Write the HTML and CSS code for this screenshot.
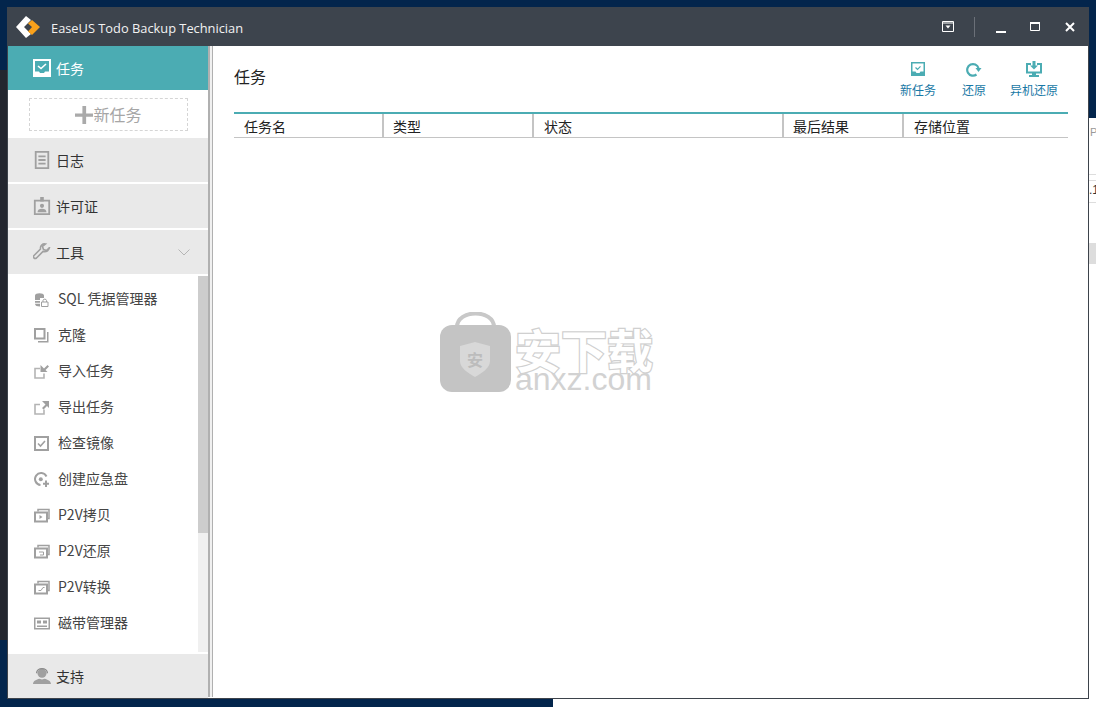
FILE: index.html
```html
<!DOCTYPE html>
<html lang="zh-CN">
<head>
    <meta charset="UTF-8">
    <title>EaseUS Todo Backup Technician</title>
    <link rel="stylesheet" href="styles.css">
</head>
<body>
    <!-- desktop behind the window -->
    <div class="desk-dark"></div>
    <div class="desk-page">
        <span class="desk-pa">Pa</span>
        <div class="desk-line line-a"></div>
        <div class="desk-line line-b"></div>
        <span class="desk-num">.1</span>
        <div class="desk-line line-c"></div>
        <div class="desk-block"></div>
    </div>
    <div class="desk-bottom"></div>

    <div class="window">
        <div class="titlebar">
            <svg class="logo" viewBox="0 0 24 22">
                <path d="M10 0L0 11l10 11 5-4-7-7 7-7z" fill="#fff"/>
                <path d="M16 4l8 7-8 8-4-3.500 4-4.500-4-3.500z" fill="#f9a11b"/>
            </svg>
            <span class="app-name">EaseUS Todo Backup Technician</span>
            <div class="win-controls">
                <svg class="win-btn menu-btn" viewBox="0 0 12 11"><path d="M.5.5h11v10H.5zM0 2h12" fill="none" stroke="#fff"/><path d="M3.500 4.500h5L6 7.500z" fill="#fff"/></svg>
                <div class="win-sep"></div>
                <svg class="win-btn min-btn" viewBox="0 0 10 10"><path d="M0 8h10v2H0z" fill="#fff"/></svg>
                <svg class="win-btn max-btn" viewBox="0 0 10 9"><path d="M.5 1h9v7.500h-9z" fill="none" stroke="#fff"/><path d="M0 0h10v2H0z" fill="#fff"/></svg>
                <svg class="win-btn close-btn" viewBox="0 0 10 10"><path d="M1 1l8 8M9 1l-8 8" fill="none" stroke="#fff" stroke-width="2"/></svg>
            </div>
        </div>

        <div class="content">
            <div class="sidebar">
                <div class="nav-item active">
                    <svg class="nav-icon" viewBox="0 0 18 18"><path d="M0 0h18v18H0z" fill="#fff"/><path d="M2 2h14v10.500h-4l-1 1.500H7l-1-1.500H2z" fill="#4bacb3"/><path d="M5 7l3 2.500L13 5" fill="none" stroke="#fff" stroke-width="1.600"/></svg>
                    <span>任务</span>
                </div>
                <div class="new-task-area">
                    <div class="new-task">
                        <svg class="plus" viewBox="0 0 17 17"><path d="M7 0h3.500v7H17v3.200h-6.500V17H7v-6.800H0V7h7z" fill="#aaa"/></svg>
                        <span>新任务</span>
                    </div>
                </div>
                <div class="nav-item">
                    <svg class="nav-icon" viewBox="0 0 16 20"><path d="M1 1h14v18H1z" fill="none" stroke="#a0a0a0" stroke-width="2"/><path d="M4 6h8M4 10h8M4 14h8" stroke="#a0a0a0" stroke-width="2"/></svg>
                    <span>日志</span>
                </div>
                <div class="nav-item nav-license">
                    <svg class="nav-icon" viewBox="0 0 18 20"><path d="M1 4h16v15H1z" fill="none" stroke="#a0a0a0" stroke-width="2"/><path d="M7 0h4v5H7zM9 7.500a2.300 2.300 0 1 1 0 4.600 2.300 2.300 0 0 1 0-4.600zM4 17c0-3 2-4 5-4s5 1 5 4z" fill="#a0a0a0"/></svg>
                    <span>许可证</span>
                </div>
                <div class="nav-item nav-tools">
                    <svg class="nav-icon" viewBox="0 0 18 18"><path d="M16.500 4.500l-3 3-3-1-1-3 3-2.500c-3-.5-5.500 1.500-5 5l-6.500 6.500c-1.500 1.500.5 4 2.500 2.500l6.500-6.500c3.500 1 6.500-1.500 6.500-4.500z" fill="none" stroke="#a0a0a0" stroke-width="1.600"/></svg>
                    <span>工具</span>
                    <svg class="chevron" viewBox="0 0 12 7"><path d="M.5.5L6 6 11.500.5" fill="none" stroke="#b5b5b5"/></svg>
                </div>

                <div class="tool-area">
                    <div class="tool-list">
                        <div class="tool">
                            <svg class="tool-icon" viewBox="0 0 15 15"><path d="M1 3.500C1 .5 10 .5 10 3.500V6H6v2H1zM1 9h5v1.800H1zM1 11.800h5V14.500C3 14.500 1 14 1 11.800z" fill="#a0a0a0"/><path d="M7.500 10h6.500v4.500H7.500zM9 10V8.500c0-1.800 3.500-1.800 3.500 0V10" fill="none" stroke="#a0a0a0"/></svg>
                            <span>SQL 凭据管理器</span>
                        </div>
                        <div class="tool">
                            <svg class="tool-icon" viewBox="0 0 15 15"><path d="M1 1h9.500v9.500H1z" fill="none" stroke="#a0a0a0" stroke-width="2"/><path d="M13 4h1.500v10.500H4V13h9z" fill="#a0a0a0"/></svg>
                            <span>克隆</span>
                        </div>
                        <div class="tool">
                            <svg class="tool-icon" viewBox="0 0 15 15"><path d="M6 4.500H1v9.500h9V9.500" fill="none" stroke="#b4b4b4" stroke-width="1.600"/><path d="M13.500 1L15 2.500l-3.500 3.500 2 2H6.500V1l2 2 1.500 1.500z" fill="#a0a0a0"/></svg>
                            <span>导入任务</span>
                        </div>
                        <div class="tool">
                            <svg class="tool-icon" viewBox="0 0 15 15"><path d="M6 4.500H1v9.500h9V9.500" fill="none" stroke="#b4b4b4" stroke-width="1.600"/><path d="M8 1h7v7l-2-2-3.500 3.500L8 8l3.500-3.500z" fill="#a0a0a0"/></svg>
                            <span>导出任务</span>
                        </div>
                        <div class="tool">
                            <svg class="tool-icon" viewBox="0 0 15 15"><path d="M1 1h13v13H1z" fill="none" stroke="#a0a0a0" stroke-width="2"/><path d="M4 7.500l2.500 2.500L11 5" fill="none" stroke="#a0a0a0" stroke-width="1.600"/></svg>
                            <span>检查镜像</span>
                        </div>
                        <div class="tool">
                            <svg class="tool-icon" viewBox="0 0 15 15"><path d="M12.500 4.500A6 6 0 1 0 6.500 13" fill="none" stroke="#a0a0a0" stroke-width="2"/><circle cx="6.800" cy="7.300" r="2" fill="#a0a0a0"/><path d="M11 8.500h2v2.200h2v2h-2V15h-2v-2.300H9v-2h2z" fill="#a0a0a0"/></svg>
                            <span>创建应急盘</span>
                        </div>
                        <div class="tool">
                            <svg class="tool-icon p2v" viewBox="0 0 16 14"><path d="M4 3V1h11v9h-2" fill="none" stroke="#a0a0a0" stroke-width="1.500"/><path d="M1 4h12v9H1z" fill="none" stroke="#a0a0a0" stroke-width="2"/><path d="M5.500 6.500l3 2-3 2z" fill="#a0a0a0"/></svg>
                            <span>P2V拷贝</span>
                        </div>
                        <div class="tool">
                            <svg class="tool-icon p2v" viewBox="0 0 16 14"><path d="M4 3V1h11v9h-2" fill="none" stroke="#a0a0a0" stroke-width="1.500"/><path d="M1 4h12v9H1z" fill="none" stroke="#a0a0a0" stroke-width="2"/><path d="M5 7.500h4.500v3H6" fill="none" stroke="#a0a0a0"/></svg>
                            <span>P2V还原</span>
                        </div>
                        <div class="tool">
                            <svg class="tool-icon p2v" viewBox="0 0 16 14"><path d="M4 3V1h11v9h-2" fill="none" stroke="#a0a0a0" stroke-width="1.500"/><path d="M1 4h12v9H1z" fill="none" stroke="#a0a0a0" stroke-width="2"/><path d="M4.500 10h2.500l2-3h1.500" fill="none" stroke="#a0a0a0"/></svg>
                            <span>P2V转换</span>
                        </div>
                        <div class="tool">
                            <svg class="tool-icon p2v" viewBox="0 0 16 12"><path d="M0 0h16v12H0z" fill="#a0a0a0"/><path d="M1.500 1.500h13v9h-13z" fill="#fff"/><path d="M3 3h4v3H3zM9 3h4v3H9zM3 8h10v1.500H3z" fill="#a0a0a0"/></svg>
                            <span>磁带管理器</span>
                        </div>
                    </div>
                    <div class="scrollbar"><div class="thumb"></div></div>
                </div>

                <div class="nav-item nav-support">
                    <svg class="nav-icon" viewBox="0 0 20 18"><circle cx="10" cy="6" r="5" fill="#a0a0a0"/><path d="M4 6c0-7 12-7 12 0" fill="none" stroke="#8a8a8a" stroke-width="1.500"/><path d="M0 18c0-4 4-5 7-6l3 1 3-1c3 1 7 2 7 6z" fill="#a0a0a0"/></svg>
                    <span>支持</span>
                </div>
            </div>

            <div class="splitter"></div>

            <div class="main">
                <div class="main-head">
                    <div class="main-title">任务</div>
                    <div class="actions">
                        <div class="action action-new">
                            <svg class="action-icon" viewBox="0 0 16 16"><path d="M1 1h14v14H1z" fill="#4bacb3"/><path d="M2.500 2.500h11v8h-3l-1 1.500h-3l-1-1.500h-3z" fill="#fff"/><path d="M5.500 6.500l2 1.800 3-3" fill="none" stroke="#4bacb3" stroke-width="1.200"/></svg>
                            <span>新任务</span>
                        </div>
                        <div class="action">
                            <svg class="action-icon" viewBox="0 0 16 16"><path d="M10.500 13.500A5.800 5.800 0 1 1 12.500 7" fill="none" stroke="#4bacb3" stroke-width="2.200"/><path d="M9.500 7h6l-3 4z" fill="#4bacb3"/></svg>
                            <span>还原</span>
                        </div>
                        <div class="action">
                            <svg class="action-icon" viewBox="0 0 16 16"><path d="M5 3H1v8.500h14V3h-4" fill="none" stroke="#4bacb3" stroke-width="2"/><path d="M6.500 0h3v4.500H12L8 8.500 4 4.500h2.500zM6 12h4v2h3v2H3v-2h3z" fill="#4bacb3"/></svg>
                            <span>异机还原</span>
                        </div>
                    </div>
                </div>
                <div class="table-head">
                    <div class="col col-name">任务名</div>
                    <div class="col col-type">类型</div>
                    <div class="col col-state">状态</div>
                    <div class="col col-result">最后结果</div>
                    <div class="col col-place">存储位置</div>
                </div>
            </div>
        </div>

        <!-- watermark over the empty table -->
        <div class="watermark">
            <svg class="bag" viewBox="0 0 71 80">
                <path d="M17 15C17 -3 54 -3 54 15" fill="none" stroke="#c8c8c8" stroke-width="4"/>
                <rect x="0" y="13" width="71" height="67" rx="12" fill="#c4c4c4"/>
                <path d="M35 30l15 4v15c0 7-8 12-15 16-7-4-15-9-15-16V34z" fill="#d8d8d8"/>
                <text class="bag-mark" x="35" y="54" text-anchor="middle">安</text>
            </svg>
            <div class="mark-text">
                <div class="mark-cn">安下载</div>
                <div class="mark-en">anxz.com</div>
            </div>
        </div>
    </div>
</body>
</html>
```

FILE: styles.css
```css
html, body {
    margin: 0;
    height: 100%;
    overflow: hidden;
}
body {
    position: relative;
    background: #03254c;
    font-family: "Noto Sans CJK SC", "Noto Sans", sans-serif;
    font-size: 14px;
    color: #333;
}

/* desktop pieces */
.desk-dark {
    position: absolute;
    left: 0;
    top: 70px;
    width: 8px;
    height: 570px;
    background: #23262f;
}
.desk-page {
    position: absolute;
    left: 1089px;
    top: 118px;
    width: 7px;
    height: 589px;
    background: #fff;
    overflow: hidden;
    font-family: "Liberation Sans", sans-serif;
    font-size: 11px;
    color: #999;
}
.desk-pa {
    position: absolute;
    left: 1px;
    top: 8px;
}
.desk-num {
    position: absolute;
    left: 0;
    top: 65px;
    color: #333;
    font-size: 12px;
}
.desk-line {
    position: absolute;
    left: 0;
    width: 7px;
    height: 1px;
    background: #ddd;
}
.line-a { top: 56px; }
.line-b { top: 62px; }
.line-c { top: 84px; }
.desk-block {
    position: absolute;
    left: 0;
    top: 125px;
    width: 7px;
    height: 21px;
    background: #ddd;
}
.desk-bottom {
    position: absolute;
    left: 553px;
    top: 699px;
    width: 543px;
    height: 8px;
    background: #fff;
}

/* window */
.window {
    position: absolute;
    left: 7px;
    top: 7px;
    width: 1080px;
    height: 691px;
    display: flex;
    flex-direction: column;
    background: #fff;
    border: 1px solid #3d434b;
    border-top: none;
}
.titlebar {
    height: 39px;
    flex-shrink: 0;
    display: flex;
    align-items: center;
    background: #3d444d;
    color: #f2f2f2;
    margin: 0 -1px;
    padding-left: 9px;
}
.logo {
    width: 24px;
    height: 22px;
}
.app-name {
    margin-left: 11px;
    margin-top: 3px;
    font-family: "Open Sans", sans-serif;
    font-size: 12.830px;
}
.win-controls {
    margin-left: auto;
    display: flex;
    align-items: center;
    padding-right: 14px;
}
.win-btn {
    display: block;
}
.menu-btn {
    width: 12px;
    height: 11px;
}
.win-sep {
    width: 1px;
    height: 20px;
    margin: 0 21px 0 20px;
    background: #6b7078;
}
.min-btn {
    width: 10px;
    height: 10px;
    margin-top: 2px;
}
.max-btn {
    width: 10px;
    height: 9px;
    margin-left: 24px;
}
.close-btn {
    width: 10px;
    height: 10px;
    margin-left: 25px;
}

.content {
    flex: 1;
    display: flex;
    min-height: 0;
}

/* sidebar */
.sidebar {
    width: 200px;
    flex-shrink: 0;
    display: flex;
    flex-direction: column;
    background: #fff;
}
.nav-item {
    height: 44px;
    flex-shrink: 0;
    display: flex;
    align-items: center;
    padding-left: 25px;
    background: #e9e9e9;
    font-size: 14px;
    color: #333;
}
.nav-item span {
    margin-left: 5px;
}
.nav-item.active {
    background: #4bacb3;
    color: #fff;
}
.nav-icon {
    width: 18px;
    height: 18px;
}
.nav-license {
    height: 46px;
    margin-top: 2px;
    border-bottom: 2px solid #fff;
    box-sizing: border-box;
}
.nav-tools {
    padding-right: 18px;
}
.nav-tools span {
    margin-top: -1px;
}
.chevron {
    width: 12px;
    height: 7px;
    margin-left: auto;
}
.new-task-area {
    height: 48px;
    flex-shrink: 0;
    padding: 8px 20px 0 21px;
    box-sizing: border-box;
}
.new-task {
    height: 33px;
    box-sizing: border-box;
    display: flex;
    align-items: center;
    justify-content: center;
    padding-bottom: 1px;
    border: 1px dashed #d5d5d5;
    color: #a6a6a6;
    font-size: 16px;
}
.plus {
    width: 18px;
    height: 18px;
    margin-top: 1px;
}

/* tools list */
.tool-area {
    flex: 1;
    min-height: 0;
    display: flex;
}
.tool-list {
    flex: 1;
    padding-top: 7px;
}
.tool {
    height: 36px;
    display: flex;
    align-items: center;
    padding-left: 26px;
    font-size: 14px;
    color: #444;
}
.tool span {
    margin-left: 9px;
    margin-top: -2px;
}
.tool-icon {
    width: 15px;
    height: 15px;
}
.tool-icon.p2v {
    width: 16px;
    margin-right: -1px;
}
.scrollbar {
    width: 10px;
    margin: 2px 0;
    background: #f0f0f0;
}
.thumb {
    height: 257px;
    background: #cdcdcd;
}

.splitter {
    width: 2px;
    flex-shrink: 0;
    background: #f0f0f0;
    border-left: 2px solid #b0b0b0;
    border-right: 1px solid #b0b0b0;
    margin-bottom: 1px;
}

/* main panel */
.main {
    flex: 1;
    padding: 0 20px 0 21px;
    min-width: 0;
}
.main-head {
    height: 66px;
    display: flex;
    justify-content: space-between;
}
.main-title {
    margin-top: 18px;
    font-size: 16px;
    line-height: 24px;
    color: #222;
}
.actions {
    display: flex;
    padding-right: 10px;
    gap: 24px;
    padding-top: 15px;
}
.action {
    display: flex;
    flex-direction: column;
    align-items: center;
    font-size: 12px;
    line-height: 18px;
    color: #1878a5;
}
.action-new {
    margin-right: 2px;
}
.action-icon {
    width: 16px;
    height: 16px;
    margin-bottom: 4px;
}
.table-head {
    display: flex;
    height: 23px;
    border-top: 2px solid #4bacb3;
    border-bottom: 1px solid #c4c4c4;
}
.col {
    box-sizing: border-box;
    padding-left: 10px;
    border-right: 2px solid #c4c4c4;
    font-size: 14px;
    line-height: 24px;
    color: #222;
    overflow: hidden;
}
.col-name { width: 150px; }
.col-type { width: 150px; padding-left: 9px; }
.col-state { width: 250px; }
.col-result { width: 120px; padding-left: 9px; }
.col-place { border-right: none; flex: 1; }

/* watermark */
.watermark {
    position: absolute;
    left: 432px;
    top: 305px;
    display: flex;
    pointer-events: none;
}
.bag {
    width: 71px;
    height: 80px;
}
.bag-mark {
    font-size: 16px;
    font-weight: 700;
    fill: #bcbcbc;
}
.mark-text {
    margin-left: 4px;
    padding-top: 11px;
}
.mark-cn {
    font-size: 46px;
    line-height: 50px;
    font-weight: 700;
    color: #fff;
    -webkit-text-stroke: 2.500px #d0d0d0;
    paint-order: stroke fill;
}
.mark-en {
    margin-top: -9px;
    font-family: "Liberation Sans", sans-serif;
    font-size: 32px;
    line-height: 30px;
    color: #d2d2d2;
}
```
